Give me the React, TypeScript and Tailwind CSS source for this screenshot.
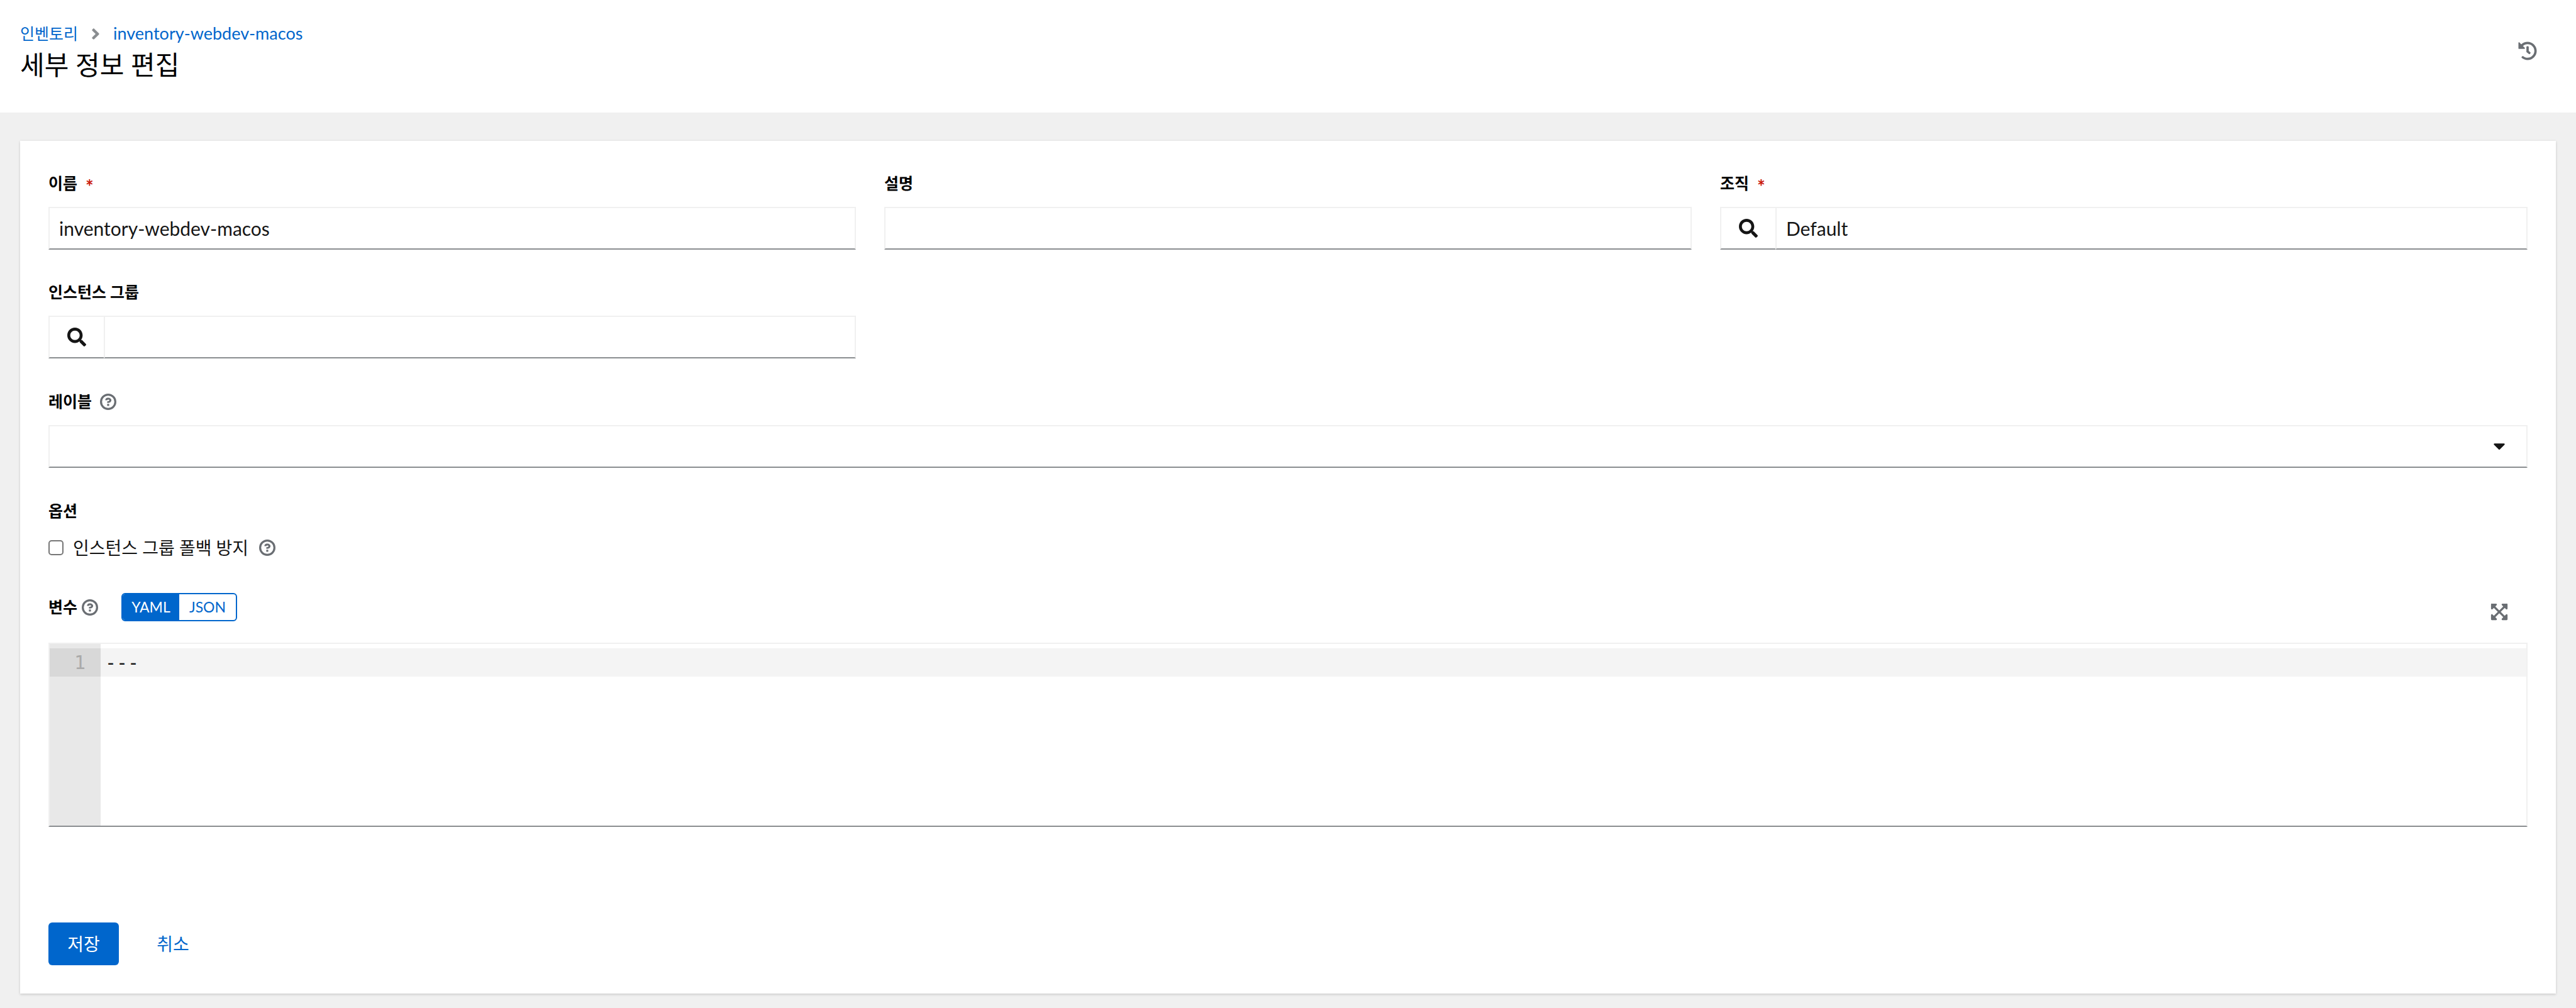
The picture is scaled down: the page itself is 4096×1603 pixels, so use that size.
import React, { useState } from 'react';
import { FaAngleRight, FaCaretDown, FaExpandArrowsAlt, FaHistory, FaSearch } from 'react-icons/fa';

interface FieldProps {
  id: string;
  label: string;
  required?: boolean;
  help?: boolean;
  children: React.ReactNode;
}

const controlClass =
  'h-[68px] w-full min-w-0 rounded-none border-2 border-[#f0f0f0] border-b-[#8a8d90] bg-white px-[15px] text-[30px] text-[#151515] outline-none';

const HelpButton: React.FC<{ label: string }> = ({ label }) => (
  <button type="button" aria-label={label} className="text-[#6a6e73]">
    <svg viewBox="0 0 1024 1024" fill="currentColor" className="size-[26px]" aria-hidden="true">
      <path d="M512 0a512 512 0 1 0 0 1024A512 512 0 1 0 512 0Zm0 128a384 384 0 1 1 0 768a384 384 0 1 1 0-768Z" fillRule="evenodd" />
      <path d="M521.3 576C627.5 576 713.7 502 713.7 413.7S627.6 253.6 521.3 253.6C366 253.6 334.5 337.7 329.2 407.2c0 7.1 6 8.8 14.3 8.8H445c5.5 0 13-.5 15.8-9.5 0-43.9 122.1-49.4 122.1 7.1 0 28.3-26.7 57.3-61.6 59.4s-74 6.8-74 48.7v32.1c0 17 8.8 22.2 24.7 22.2Z" />
      <path d="M463.3 640h96a16 16 0 0 1 16 16v96a16 16 0 0 1-16 16h-96a16 16 0 0 1-16-16v-96a16 16 0 0 1 16-16Z" />
    </svg>
  </button>
);

const Field: React.FC<FieldProps> = ({ id, label, required, help, children }) => (
  <div className="flex flex-col gap-[15px]">
    <div className="flex h-[45px] items-center gap-[13px]">
      <label htmlFor={id} className="flex items-center gap-[13px] text-[25px] font-bold text-black">
        {label}
        {required && <span className="h-[30px] text-[30px] leading-[38px] text-[#c9190b]">*</span>}
      </label>
      {help && <HelpButton label={`${label} 도움말`} />}
    </div>
    {children}
  </div>
);

const LookupInput: React.FC<{ id: string; initial: string }> = ({ id, initial }) => {
  const [value, setValue] = useState(initial);
  return (
    <div className="flex">
      <button
        type="button"
        aria-label="검색"
        className="flex h-[68px] w-[90px] shrink-0 items-center justify-center border-2 border-[#f0f0f0] border-b-[#8a8d90] text-[#151515]"
      >
        <FaSearch size={30} />
      </button>
      <input id={id} className={`${controlClass} -ml-0.5`} value={value} onChange={(e) => setValue(e.target.value)} />
    </div>
  );
};

const App: React.FC = () => {
  const [name, setName] = useState('inventory-webdev-macos');
  const [description, setDescription] = useState('');
  const [preventFallback, setPreventFallback] = useState(false);
  const [mode, setMode] = useState<'yaml' | 'json'>('yaml');
  const [variables, setVariables] = useState('---');

  return (
    <div className="min-h-screen bg-[#f0f0f0] font-['Lato','Noto_Sans_CJK_KR',sans-serif] text-[#151515]">
      <header className="flex items-start justify-between bg-white px-8 pt-[34px] pb-[46px]">
        <div>
          <nav aria-label="breadcrumb">
            <ol className="flex h-[39px] items-center gap-[21px] text-[27px] text-[#0066cc]">
              <li className="text-[25px]">
                <a href="#inventories">인벤토리</a>
              </li>
              <li className="flex items-center gap-[21px]">
                <FaAngleRight size={28} className="w-[14px] text-[#8a8d90]" />
                <a href="#inventory">inventory-webdev-macos</a>
              </li>
            </ol>
          </nav>
          <h1 className="text-[42px] leading-[60px] text-black">세부 정보 편집</h1>
        </div>
        <button type="button" aria-label="기록" className="flex h-[94px] w-[90px] items-center justify-center text-[#6a6e73]">
          <FaHistory size={30} />
        </button>
      </header>

      <main className="px-8 pt-[45px] pb-[23px]">
        <form
          className="flex flex-col gap-[46px] bg-white p-[45px] shadow-[0_2px_4px_rgba(3,3,3,0.12),0_0_4px_rgba(3,3,3,0.06)]"
          onSubmit={(e) => e.preventDefault()}
        >
          <div className="grid grid-cols-3 gap-[45px]">
            <Field id="name" label="이름" required>
              <input id="name" className={controlClass} value={name} onChange={(e) => setName(e.target.value)} />
            </Field>
            <Field id="description" label="설명">
              <input id="description" className={controlClass} value={description} onChange={(e) => setDescription(e.target.value)} />
            </Field>
            <Field id="organization" label="조직" required>
              <LookupInput id="organization" initial="Default" />
            </Field>
            <Field id="instance-groups" label="인스턴스 그룹">
              <LookupInput id="instance-groups" initial="" />
            </Field>
          </div>

          <Field id="labels" label="레이블" help>
            <div className="relative">
              <select id="labels" className={`${controlClass} appearance-none`} />
              <FaCaretDown size={30} className="pointer-events-none absolute top-[18px] right-[30px]" />
            </div>
          </Field>

          <fieldset>
            <legend className="flex h-[45px] items-center text-[25px] font-bold text-black">옵션</legend>
            <div className="mt-[13px] flex h-[45px] items-center">
              <input
                id="prevent-fallback"
                type="checkbox"
                className="size-6 appearance-none rounded-[5px] border-2 border-[#767676] bg-white checked:bg-[#0066cc]"
                checked={preventFallback}
                onChange={(e) => setPreventFallback(e.target.checked)}
              />
              <label htmlFor="prevent-fallback" className="mr-[17px] ml-[15px] text-[28px]">
                인스턴스 그룹 폴백 방지
              </label>
              <HelpButton label="폴백 방지 도움말" />
            </div>
          </fieldset>

          <div className="flex flex-col gap-[15px]">
            <div className="flex items-start justify-between">
              <div className="flex items-center pt-1">
                <label htmlFor="variables" className="mr-[7px] text-[25px] font-bold text-black">
                  변수
                </label>
                <HelpButton label="변수 도움말" />
                <div className="ml-[37px] flex h-[45px] overflow-hidden rounded-md border-2 border-[#0066cc] text-[23px]">
                  <button
                    type="button"
                    onClick={() => setMode('yaml')}
                    className={`w-[90px] ${mode === 'yaml' ? 'bg-[#0066cc] text-white' : 'text-[#0066cc]'}`}
                  >
                    YAML
                  </button>
                  <button
                    type="button"
                    onClick={() => setMode('json')}
                    className={`w-[90px] ${mode === 'json' ? 'bg-[#0066cc] text-white' : 'text-[#0066cc]'}`}
                  >
                    JSON
                  </button>
                </div>
              </div>
              <button type="button" aria-label="확장" className="flex h-[68px] w-[90px] items-center justify-center text-[#6a6e73]">
                <FaExpandArrowsAlt size={30} />
              </button>
            </div>

            <div className="flex h-[293px] border-2 border-[#f0f0f0] border-b-[#8a8d90] font-['DejaVu_Sans_Mono',monospace] text-[30px] leading-[45px]">
              <div className="w-[81px] shrink-0 bg-[#e8e8e8] pt-[7px] text-right text-[#aaaaaa]">
                <div className="bg-[#d8d8d8] pr-6">1</div>
              </div>
              <div className="relative flex-1">
                {/* active line */}
                <div className="absolute inset-x-0 top-[7px] h-[45px] bg-[#f4f4f4]" />
                <textarea
                  id="variables"
                  className="relative block h-full w-full resize-none bg-transparent px-[7px] pt-[7px] text-[#151515] outline-none"
                  value={variables}
                  onChange={(e) => setVariables(e.target.value)}
                />
              </div>
            </div>
          </div>

          <div className="flex gap-[30px] pt-[106px] text-[28px]">
            <button type="submit" className="h-[68px] w-[112px] rounded-md bg-[#0066cc] text-white">
              저장
            </button>
            <button type="button" className="h-[68px] w-[112px] text-[#0066cc]">
              취소
            </button>
          </div>
        </form>
      </main>
    </div>
  );
};

export default App;
